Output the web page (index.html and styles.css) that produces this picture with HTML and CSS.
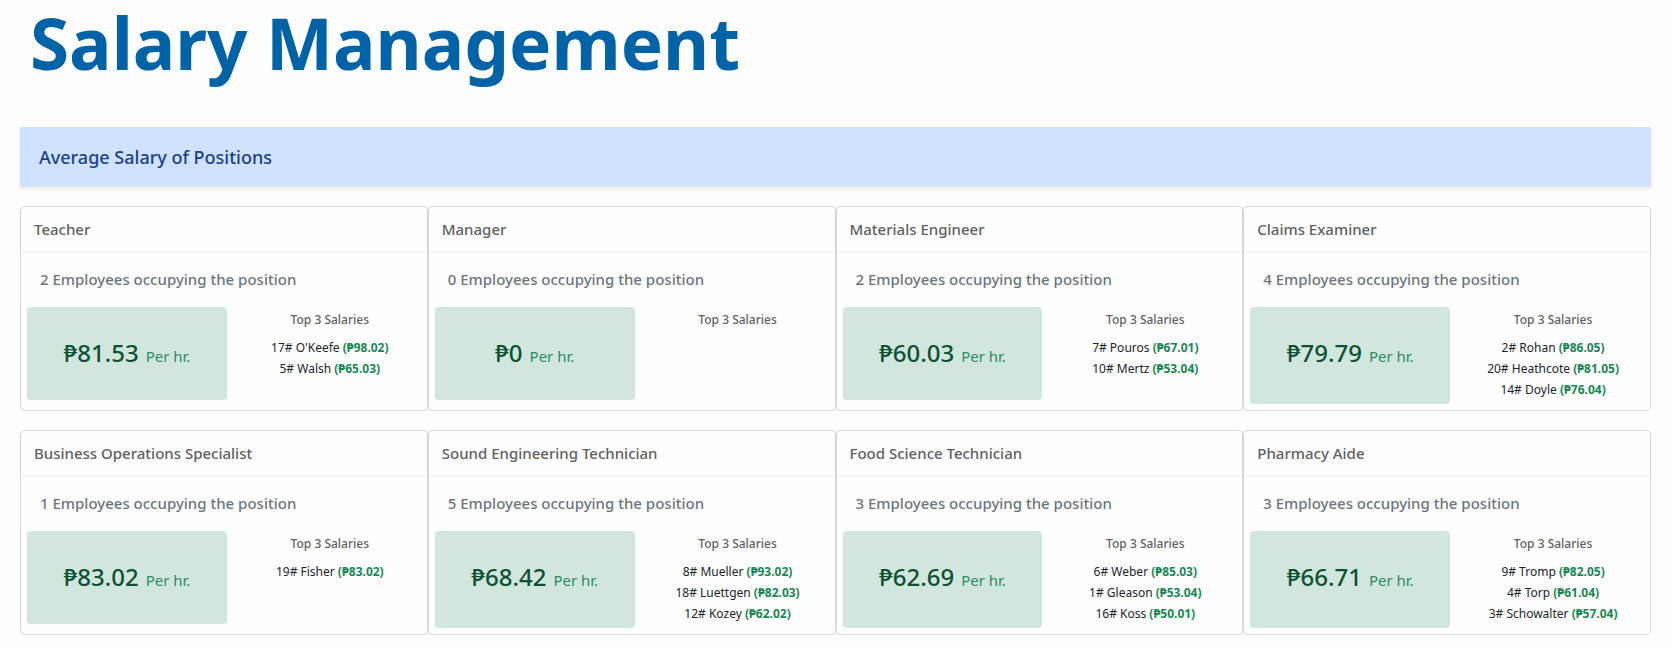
FILE: index.html
```html
<!DOCTYPE html>
<html lang="en">
<head>
<meta charset="utf-8">
<title>Salary Management</title>
<link rel="stylesheet" href="styles.css">
</head>
<body>
<main class="page">
  <h1 class="page-title">Salary Management</h1>
  <h2 class="banner">Average Salary of Positions</h2>
  <div class="positions">
    <section class="card">
      <h3 class="card-header">Teacher</h3>
      <p class="count">2 Employees occupying the position</p>
      <div class="card-body">
        <p class="rate"><span class="amount">₱81.53</span> <span class="unit">Per hr.</span></p>
        <div class="top">
          <h4 class="top-title">Top 3 Salaries</h4>
          <ul class="top-list">
            <li>17# O'Keefe <b>(₱98.02)</b></li>
            <li>5# Walsh <b>(₱65.03)</b></li>
          </ul>
        </div>
      </div>
    </section>
    <section class="card">
      <h3 class="card-header">Manager</h3>
      <p class="count">0 Employees occupying the position</p>
      <div class="card-body">
        <p class="rate"><span class="amount">₱0</span> <span class="unit">Per hr.</span></p>
        <div class="top">
          <h4 class="top-title">Top 3 Salaries</h4>
        </div>
      </div>
    </section>
    <section class="card">
      <h3 class="card-header">Materials Engineer</h3>
      <p class="count">2 Employees occupying the position</p>
      <div class="card-body">
        <p class="rate"><span class="amount">₱60.03</span> <span class="unit">Per hr.</span></p>
        <div class="top">
          <h4 class="top-title">Top 3 Salaries</h4>
          <ul class="top-list">
            <li>7# Pouros <b>(₱67.01)</b></li>
            <li>10# Mertz <b>(₱53.04)</b></li>
          </ul>
        </div>
      </div>
    </section>
    <section class="card">
      <h3 class="card-header">Claims Examiner</h3>
      <p class="count">4 Employees occupying the position</p>
      <div class="card-body">
        <p class="rate"><span class="amount">₱79.79</span> <span class="unit">Per hr.</span></p>
        <div class="top">
          <h4 class="top-title">Top 3 Salaries</h4>
          <ul class="top-list">
            <li>2# Rohan <b>(₱86.05)</b></li>
            <li>20# Heathcote <b>(₱81.05)</b></li>
            <li>14# Doyle <b>(₱76.04)</b></li>
          </ul>
        </div>
      </div>
    </section>
    <section class="card">
      <h3 class="card-header">Business Operations Specialist</h3>
      <p class="count">1 Employees occupying the position</p>
      <div class="card-body">
        <p class="rate"><span class="amount">₱83.02</span> <span class="unit">Per hr.</span></p>
        <div class="top">
          <h4 class="top-title">Top 3 Salaries</h4>
          <ul class="top-list">
            <li>19# Fisher <b>(₱83.02)</b></li>
          </ul>
        </div>
      </div>
    </section>
    <section class="card">
      <h3 class="card-header">Sound Engineering Technician</h3>
      <p class="count">5 Employees occupying the position</p>
      <div class="card-body">
        <p class="rate"><span class="amount">₱68.42</span> <span class="unit">Per hr.</span></p>
        <div class="top">
          <h4 class="top-title">Top 3 Salaries</h4>
          <ul class="top-list">
            <li>8# Mueller <b>(₱93.02)</b></li>
            <li>18# Luettgen <b>(₱82.03)</b></li>
            <li>12# Kozey <b>(₱62.02)</b></li>
          </ul>
        </div>
      </div>
    </section>
    <section class="card">
      <h3 class="card-header">Food Science Technician</h3>
      <p class="count">3 Employees occupying the position</p>
      <div class="card-body">
        <p class="rate"><span class="amount">₱62.69</span> <span class="unit">Per hr.</span></p>
        <div class="top">
          <h4 class="top-title">Top 3 Salaries</h4>
          <ul class="top-list">
            <li>6# Weber <b>(₱85.03)</b></li>
            <li>1# Gleason <b>(₱53.04)</b></li>
            <li>16# Koss <b>(₱50.01)</b></li>
          </ul>
        </div>
      </div>
    </section>
    <section class="card">
      <h3 class="card-header">Pharmacy Aide</h3>
      <p class="count">3 Employees occupying the position</p>
      <div class="card-body">
        <p class="rate"><span class="amount">₱66.71</span> <span class="unit">Per hr.</span></p>
        <div class="top">
          <h4 class="top-title">Top 3 Salaries</h4>
          <ul class="top-list">
            <li>9# Tromp <b>(₱82.05)</b></li>
            <li>4# Torp <b>(₱61.04)</b></li>
            <li>3# Schowalter <b>(₱57.04)</b></li>
          </ul>
        </div>
      </div>
    </section>
  </div>
</main>
</body>
</html>
```

FILE: styles.css
```css
* {
  box-sizing: border-box;
  margin: 0;
  padding: 0;
}

body {
  background: #fefefe;
  color: #212529;
  font-family: "Segoe UI", "Noto Sans", "Open Sans", sans-serif;
  font-size: 16px;
}

.page {
  padding: 0 22px 11px 20px;
}

.page-title {
  padding-left: 10px;
  margin-bottom: 42px;
  color: #0063a7;
  font-size: 71px;
  font-weight: 700;
  line-height: 85px;
}

.banner {
  padding: 18px 19px;
  margin-bottom: 19px;
  background: #cfe2ff;
  box-shadow: 0 2px 4px rgba(0, 0, 0, 0.08);
  color: #1a3f8f;
  font-size: 18px;
  font-weight: 500;
  line-height: 24px;
}

.positions {
  display: grid;
  grid-template-columns: repeat(4, 1fr);
  row-gap: 19px;
}

.card {
  border: 1px solid #d9dadb;
  border-radius: 4px;
  background: #fefefe;
}

.card-header {
  padding: 10px 13px;
  box-shadow: 0 2px 4px rgba(0, 0, 0, 0.06);
  color: #5f6061;
  font-size: 15px;
  font-weight: 500;
  line-height: 24px;
}

.count {
  padding: 16px 19px;
  color: #6c757d;
  font-size: 15px;
  font-weight: 500;
  line-height: 24px;
}

.card-body {
  display: grid;
  grid-template-columns: 1fr 1fr;
  padding: 0 0 6px 6px;
}

.rate {
  display: flex;
  align-items: baseline;
  justify-content: center;
  align-self: stretch;
  gap: 7px;
  min-height: 93px;
  padding-top: 28px;
  border-radius: 4px;
  background: #d1e7dd;
  line-height: 36px;
}

.amount {
  color: #0f5132;
  font-size: 24px;
  font-weight: 500;
}

.unit {
  color: #2f8a60;
  font-size: 15px;
}

.top {
  padding: 0 16px 0 22px;
  text-align: center;
  font-size: 12px;
}

.top-title {
  margin-bottom: 4px;
  color: #5f6061;
  font-size: 12px;
  font-weight: 500;
  line-height: 26px;
}

.top-list {
  list-style: none;
  line-height: 21px;
  margin-bottom: 4px;
}

.top-list b {
  color: #198754;
  font-weight: 700;
}
```
